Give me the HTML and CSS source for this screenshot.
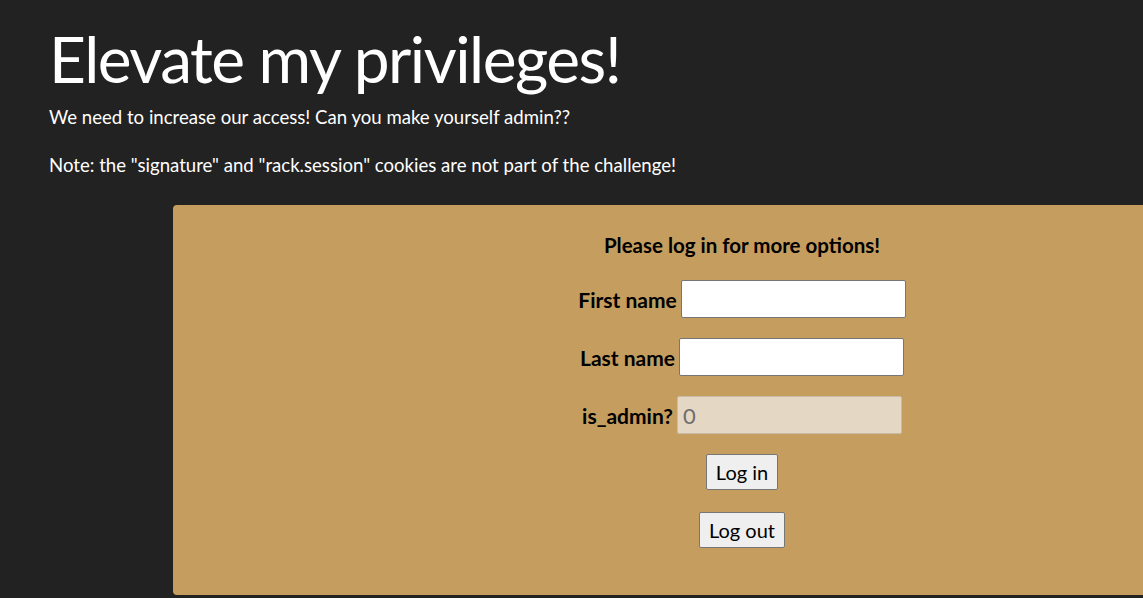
FILE: index.html
```html
<!DOCTYPE html>
<html>
<head>
<meta charset="utf-8">
<link rel="stylesheet" href="styles.css">
</head>
<body>
<div class="wrap">
  <h1 class="title">Elevate my privileges!</h1>
  <p class="text">We need to increase our access! Can you make yourself admin??</p>
  <p class="text last">Note: the "signature" and "rack.session" cookies are not part of the challenge!</p>
  <div class="panel">
    <div class="prompt">Please log in for more options!</div>
    <form class="form">
      <div class="row"><label class="label">First name</label><input class="field" type="text"></div>
      <div class="row"><label class="label">Last name</label><input class="field" type="text"></div>
      <div class="row"><label class="label">is_admin?</label><input class="field disabled" type="text" value="0" disabled></div>
      <div class="row"><button class="btn" type="button">Log in</button></div>
      <div class="row row-last"><button class="btn" type="button">Log out</button></div>
    </form>
  </div>
</div>
</body>
</html>
```
FILE: styles.css
```css
html, body {
  margin: 0;
  padding: 0;
  background: #222222;
  overflow: hidden;
  font-family: Lato, "Liberation Sans", sans-serif;
}
.wrap {
  padding: 19px 0 0 49px;
}
.title {
  margin: 0;
  font-size: 64px;
  font-weight: 400;
  letter-spacing: -1.5px;
  line-height: 80px;
  color: #ffffff;
}
.text {
  margin: 6px 0 24px;
  font-size: 18.6px;
  line-height: 24px;
  color: #ffffff;
}
.text.last {
  margin-bottom: 28px;
}
.panel {
  margin-left: 124px;
  width: 1138px;
  box-sizing: border-box;
  background: #c49d5f;
  border-radius: 4px;
  padding: 24px 0 47px;
  color: #000;
}
.prompt {
  text-align: center;
  font-weight: 700;
  font-size: 20.5px;
  line-height: 32px;
}
.form {
  margin-top: 19px;
  display: flex;
  flex-direction: column;
  align-items: center;
  gap: 20px;
}
.row {
  display: flex;
  align-items: center;
  gap: 4px;
}
.row-last {
  margin-top: 2px;
}
.label {
  font-weight: 700;
  font-size: 21px;
}
.field {
  width: 225px;
  height: 38px;
  box-sizing: border-box;
  border: 1px solid #767676;
  border-radius: 2px;
  background: #ffffff;
  font-family: Lato, sans-serif;
  font-size: 22px;
  padding: 0 5px;
}
.field.disabled {
  background: #e4d8c4;
  border-color: #c9bca6;
  color: #6d6d6d;
}
.btn {
  height: 36px;
  font-family: Lato, sans-serif;
  font-size: 20px;
  padding: 0 9px;
  background: #efefef;
  border: 1px solid #767676;
  border-radius: 2px;
  color: #000;
}
```
